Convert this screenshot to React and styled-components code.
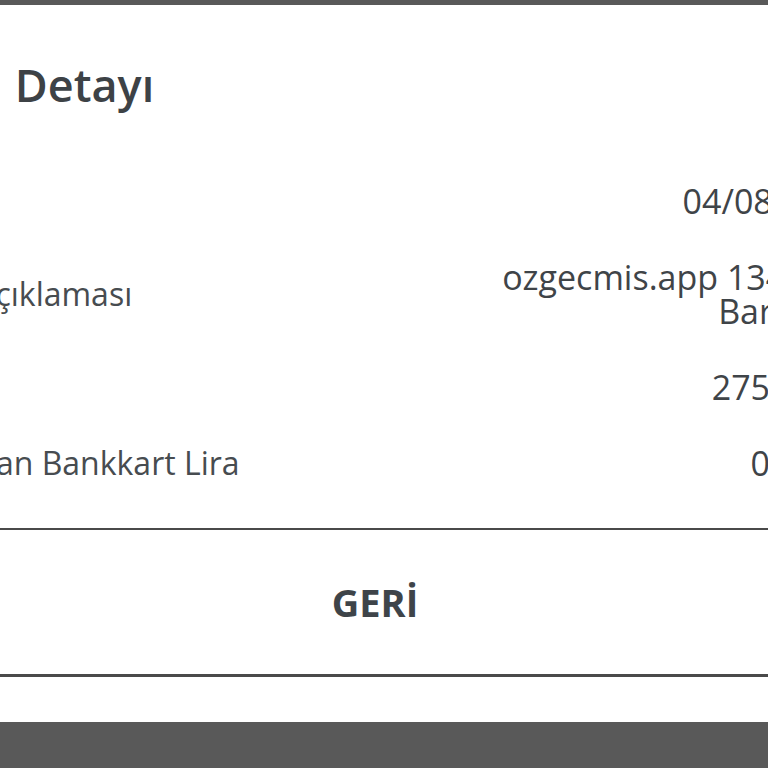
import styled, { createGlobalStyle } from "styled-components";

const GlobalStyle = createGlobalStyle`
  html, body {
    margin: 0;
    padding: 0;
    overflow: hidden;
  }
  body {
    font-family: "Open Sans", "Liberation Sans", sans-serif;
  }
`;

const rows = [
  { label: "Tarih", value: "04/08/2024" },
  { label: "İşlem Açıklaması", value: "ozgecmis.app 1340587 Bartın TR" },
  { label: "Tutar", value: "275,00 TL" },
  { label: "Kullanılan Bankkart Lira", value: "0,00 TL" },
];

const App = () => (
  <>
    <GlobalStyle />
    <Backdrop>
      <Sheet>
        <Title>İşlem Detayı</Title>
        <DetailList>
          {rows.map((row) => (
            <DetailRow key={row.label}>
              <Label>{row.label}</Label>
              <Value>{row.value}</Value>
            </DetailRow>
          ))}
        </DetailList>
        <Footer>
          <BackButton type="button">GERİ</BackButton>
        </Footer>
      </Sheet>
    </Backdrop>
  </>
);

export default App;

const Backdrop = styled.div`
  width: 768px;
  height: 768px;
  overflow: hidden;
  background: #595959;
  padding-top: 5px;
  box-sizing: border-box;
`;

const Sheet = styled.div`
  width: 1024px;
  height: 717px;
  margin-left: -137px;
  padding: 47px 24px 0;
  box-sizing: border-box;
  background: #fff;
  color: #3f4448;
  display: flex;
  flex-direction: column;
`;

const Title = styled.h1`
  margin: 0 0 0 -7px;
  font-size: 45px;
  line-height: 66px;
  font-weight: 600;
  word-spacing: 6px;
  color: #3d4246;
  white-space: nowrap;
`;

const DetailList = styled.div`
  margin-top: 45px;
  display: flex;
  flex-direction: column;
`;

const DetailRow = styled.div`
  display: flex;
  justify-content: space-between;
  align-items: center;
  padding: 21px 0;
`;

const Label = styled.span`
  font-size: 32px;
  line-height: 34px;
  font-weight: 400;
  color: #474c50;
  white-space: nowrap;
`;

const Value = styled.span`
  max-width: 380px;
  text-align: right;
  font-size: 34px;
  line-height: 34px;
  font-weight: 500;
  color: #3f4448;
`;

const Footer = styled.div`
  margin: 27px -24px 0;
  border-top: 2px solid #4a4a4a;
  border-bottom: 3px solid #4a4a4a;
  height: 144px;
  display: flex;
  align-items: center;
  justify-content: center;
`;

const BackButton = styled.button`
  border: none;
  background: none;
  padding: 0;
  font-family: inherit;
  font-size: 38px;
  font-weight: 700;
  color: #3e4449;
  cursor: pointer;
`;
